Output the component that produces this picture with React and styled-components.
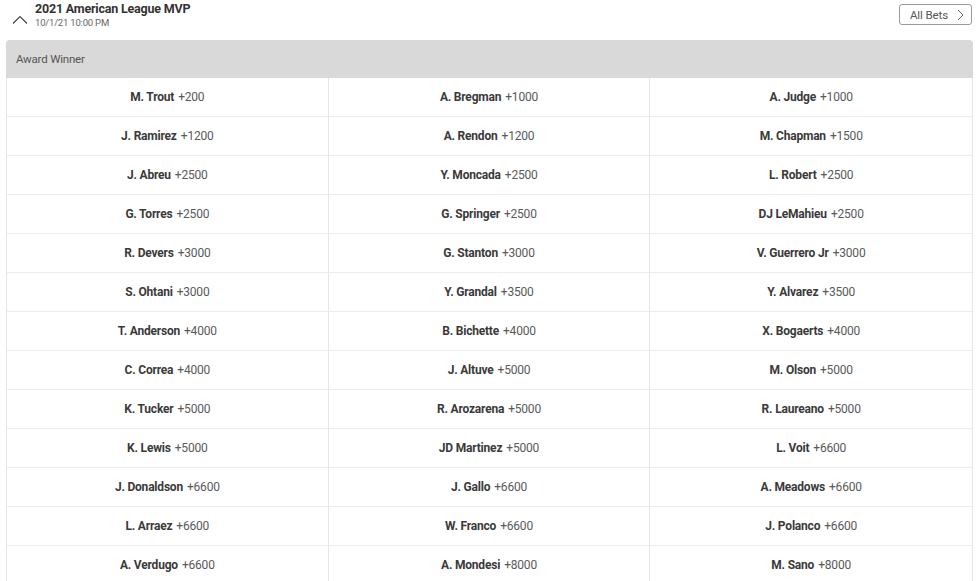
import React from "react";
import styled, { createGlobalStyle } from "styled-components";

const GlobalStyle = createGlobalStyle`
  body {
    margin: 0;
    background: #fff;
    font-family: Roboto, "Liberation Sans", sans-serif;
    color: #333;
  }
`;

const Page = styled.div`
  width: 980px;
  height: 581px;
  overflow: hidden;
  padding: 0 7px 0 6px;
  box-sizing: border-box;
`;

const Header = styled.div`
  display: flex;
  align-items: flex-start;
  height: 40px;
`;

const Toggle = styled.div`
  width: 29px;
  padding: 10px 0 0 6px;
  box-sizing: border-box;
`;

const TitleBlock = styled.div`
  flex: 1;
  padding-top: 1px;
`;

const Title = styled.div`
  font-size: 12.5px;
  font-weight: 700;
  color: #333;
  letter-spacing: -0.2px;
  line-height: 15px;
`;

const Date = styled.div`
  font-size: 9.5px;
  color: #666;
  line-height: 12px;
  margin-top: 1px;
  letter-spacing: -0.2px;
`;

const AllBets = styled.button`
  margin-top: 4px;
  margin-right: 1px;
  height: 21px;
  padding: 0 7px 0 10px;
  display: flex;
  align-items: center;
  gap: 9px;
  border: 1px solid #9a9a9a;
  border-radius: 3px;
  background: #fff;
  font-family: Roboto, "Liberation Sans", sans-serif;
  font-size: 11.5px;
  color: #555;
  letter-spacing: -0.1px;
`;

const Market = styled.div`
  border-radius: 4px 4px 0 0;
  overflow: hidden;
`;

const MarketBar = styled.div`
  height: 38px;
  background: #d9d9d9;
  display: flex;
  align-items: center;
  padding-left: 10px;
  font-size: 11.5px;
  color: #555;
  letter-spacing: -0.2px;
`;

const Grid = styled.div`
  display: grid;
  grid-template-columns: repeat(3, 1fr);
  border-left: 1px solid #e6e6e6;
  border-right: 1px solid #e6e6e6;
`;

const Cell = styled.div`
  height: 39px;
  box-sizing: border-box;
  display: flex;
  align-items: center;
  justify-content: center;
  gap: 4px;
  border-bottom: 1px solid #ececec;
  border-right: ${(p) => (p.$last ? "none" : "1px solid #e6e6e6")};
  font-size: 12px;
  letter-spacing: -0.2px;
`;

const Name = styled.span`
  font-weight: 700;
  color: #3a3a3a;
`;

const Odds = styled.span`
  color: #5a5a5a;
`;

const Chevron = ({ up }) => (
  <svg width="16" height="10" viewBox="0 0 16 10">
    <path
      d={up ? "M1 8.5 L8 1.5 L15 8.5" : "M1 1.5 L8 8.5 L15 1.5"}
      fill="none"
      stroke="#444"
      strokeWidth="1.2"
    />
  </svg>
);

const Right = () => (
  <svg width="7" height="12" viewBox="0 0 7 12">
    <path d="M1 1 L6 6 L1 11" fill="none" stroke="#666" strokeWidth="1" />
  </svg>
);

const players = [
  ["M. Trout", "+200"], ["A. Bregman", "+1000"], ["A. Judge", "+1000"],
  ["J. Ramirez", "+1200"], ["A. Rendon", "+1200"], ["M. Chapman", "+1500"],
  ["J. Abreu", "+2500"], ["Y. Moncada", "+2500"], ["L. Robert", "+2500"],
  ["G. Torres", "+2500"], ["G. Springer", "+2500"], ["DJ LeMahieu", "+2500"],
  ["R. Devers", "+3000"], ["G. Stanton", "+3000"], ["V. Guerrero Jr", "+3000"],
  ["S. Ohtani", "+3000"], ["Y. Grandal", "+3500"], ["Y. Alvarez", "+3500"],
  ["T. Anderson", "+4000"], ["B. Bichette", "+4000"], ["X. Bogaerts", "+4000"],
  ["C. Correa", "+4000"], ["J. Altuve", "+5000"], ["M. Olson", "+5000"],
  ["K. Tucker", "+5000"], ["R. Arozarena", "+5000"], ["R. Laureano", "+5000"],
  ["K. Lewis", "+5000"], ["JD Martinez", "+5000"], ["L. Voit", "+6600"],
  ["J. Donaldson", "+6600"], ["J. Gallo", "+6600"], ["A. Meadows", "+6600"],
  ["L. Arraez", "+6600"], ["W. Franco", "+6600"], ["J. Polanco", "+6600"],
  ["A. Verdugo", "+6600"], ["A. Mondesi", "+8000"], ["M. Sano", "+8000"],
];

export default function App() {
  return (
    <Page>
      <GlobalStyle />
      <Header>
        <Toggle>
          <Chevron up />
        </Toggle>
        <TitleBlock>
          <Title>2021 American League MVP</Title>
          <Date>10/1/21 10:00 PM</Date>
        </TitleBlock>
        <AllBets>
          All Bets <Right />
        </AllBets>
      </Header>
      <Market>
        <MarketBar>Award Winner</MarketBar>
        <Grid>
          {players.map(([name, odds], i) => (
            <Cell key={name} $last={i % 3 === 2}>
              <Name>{name}</Name>
              <Odds>{odds}</Odds>
            </Cell>
          ))}
        </Grid>
      </Market>
    </Page>
  );
}
